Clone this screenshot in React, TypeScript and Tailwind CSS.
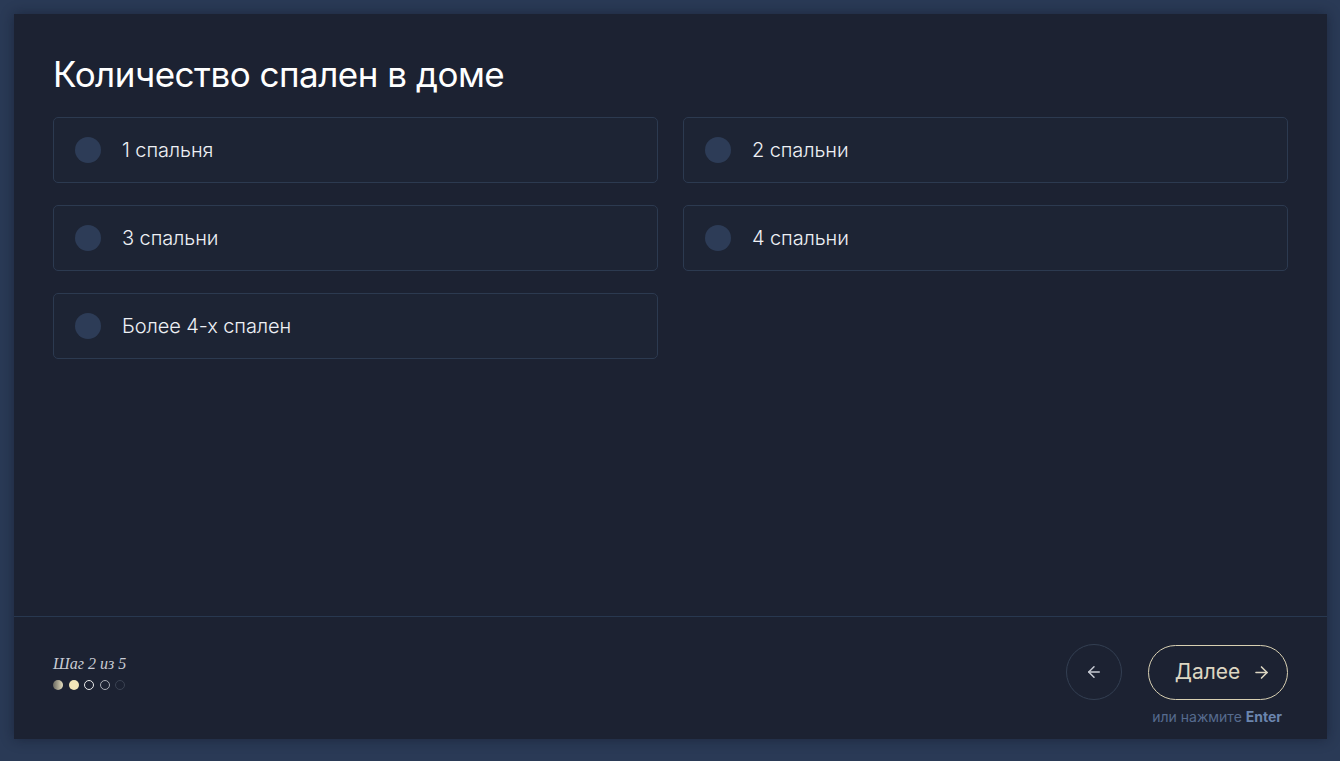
import React from "react";

const options = ["1 спальня", "2 спальни", "3 спальни", "4 спальни", "Более 4-х спален"];

function Option({ label }: { label: string }) {
  return (
    <div className="flex h-[66px] items-center rounded-[5px] border border-[#2c3a50] bg-[#1d2434] pl-[21px]">
      <div className="h-[26px] w-[26px] shrink-0 rounded-full bg-[#2d3c57]" />
      <span className="ml-[21px] text-[20px] font-light text-[#eef0f4]" style={{ letterSpacing: "-0.1px" }}>
        {label}
      </span>
    </div>
  );
}

export default function App() {
  return (
    <div
      className="h-[761px] w-[1340px] overflow-hidden bg-[#2a3a56] pl-[14px] pt-[14px]"
      style={{ fontFamily: "Inter, 'Noto Sans', sans-serif" }}
    >
      <div className="flex h-[725px] w-[1313px] flex-col bg-[#1c2232] shadow-[0_0_12px_rgba(10,15,30,0.45)]">
        <div className="h-[603px] border-b border-[#283850] px-[39px] pt-[38px]">
          <h1 className="text-[35px] font-normal leading-[44px] tracking-[-0.5px] text-white">
            Количество спален в доме
          </h1>
          <div className="mt-[21px] grid grid-cols-2 gap-x-[25px] gap-y-[22px]">
            {options.map((o) => (
              <Option key={o} label={o} />
            ))}
          </div>
        </div>
        <div className="flex flex-1 items-start justify-between pl-[39px] pr-[39px] pt-[27px]">
          <div className="pt-[10px]">
            <div
              className="text-[16px] italic leading-[20px] text-[#c9ccd4]"
              style={{ fontFamily: "'Liberation Serif', serif" }}
            >
              Шаг 2 из 5
            </div>
            <div className="mt-[6px] flex items-center gap-[5.5px]">
              <div className="h-[10px] w-[10px] rounded-full bg-gradient-to-r from-[#6b6a62] to-[#e6dfbf]" />
              <div className="h-[10px] w-[10px] rounded-full bg-[#f2e6b8]" />
              <div className="h-[10px] w-[10px] rounded-full border-[1.5px] border-[#e8e8e8]" />
              <div className="h-[10px] w-[10px] rounded-full border-[1.5px] border-[#a8abb2]" />
              <div className="h-[10px] w-[10px] rounded-full border-[1.5px] border-[#3a4252]" />
            </div>
          </div>
          <div className="flex flex-col items-end">
            <div className="flex items-center gap-[26px]">
              <button className="flex h-[56px] w-[56px] items-center justify-center rounded-full border border-[#333f52] text-[#c7cbd3]">
                <svg width="18" height="18" viewBox="0 0 24 24" fill="none" stroke="currentColor" strokeWidth="2" strokeLinecap="round" strokeLinejoin="round">
                  <path d="M19 12H5" />
                  <path d="M12 19l-7-7 7-7" />
                </svg>
              </button>
              <button className="flex h-[55px] w-[140px] items-center justify-center gap-[12px] rounded-full border-[1.5px] border-[#d8d0b2] pl-[10px] text-[#dcd6c2]">
                <span className="text-[21px] font-normal">Далее</span>
                <svg width="19" height="19" viewBox="0 0 24 24" fill="none" stroke="currentColor" strokeWidth="2" strokeLinecap="round" strokeLinejoin="round">
                  <path d="M5 12h14" />
                  <path d="M12 5l7 7-7 7" />
                </svg>
              </button>
            </div>
            <div className="mt-[6px] pr-[6px] text-[14px] text-[#566b8e]">
              или нажмите <span className="font-bold text-[#6b85ae]">Enter</span>
            </div>
          </div>
        </div>
      </div>
    </div>
  );
}
